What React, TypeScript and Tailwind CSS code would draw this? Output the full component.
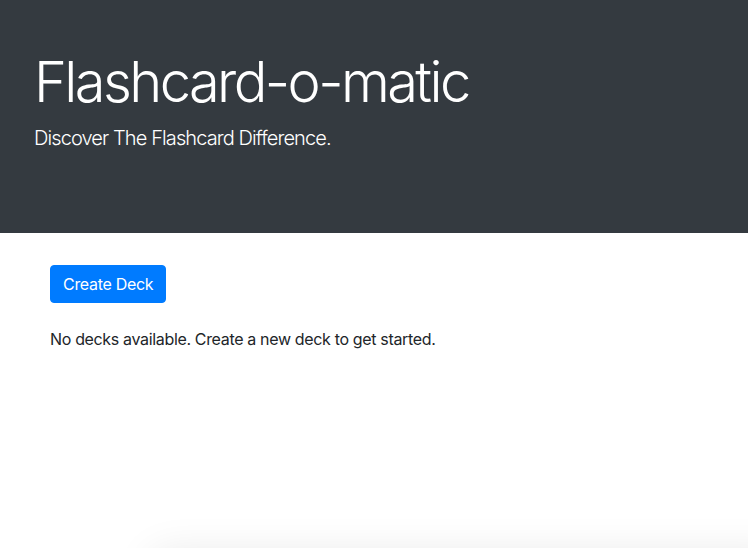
const Header = () => (
  <header className="h-[233px] bg-[#343a40] pl-[34px] pt-[49px] text-white">
    <h1 className="mb-[7px] text-[56px] leading-[1.2] font-light tracking-[-2.6px]">Flashcard-o-matic</h1>
    <p className="text-[20px] leading-[1.5] font-light tracking-[-0.9px]">Discover The Flashcard Difference.</p>
  </header>
);

export default function App() {
  return (
    <div className="relative h-[548px] overflow-hidden bg-white font-['Inter',sans-serif] text-[#212529]">
      <Header />
      <main className="px-[50px] pt-8">
        <button className="rounded border border-[#007bff] bg-[#007bff] px-3 py-1.5 text-base leading-6 tracking-[-0.3px] text-white">
          Create Deck
        </button>
        <p className="mt-6 text-base leading-6 tracking-[-0.34px]">No decks available. Create a new deck to get started.</p>
      </main>
      {/* faint shadow peeking in at the bottom */}
      <div className="absolute top-[552px] left-[150px] -right-10 h-20 rounded-2xl bg-white shadow-[0_0_40px_rgba(0,0,0,0.09)]" />
    </div>
  );
}
